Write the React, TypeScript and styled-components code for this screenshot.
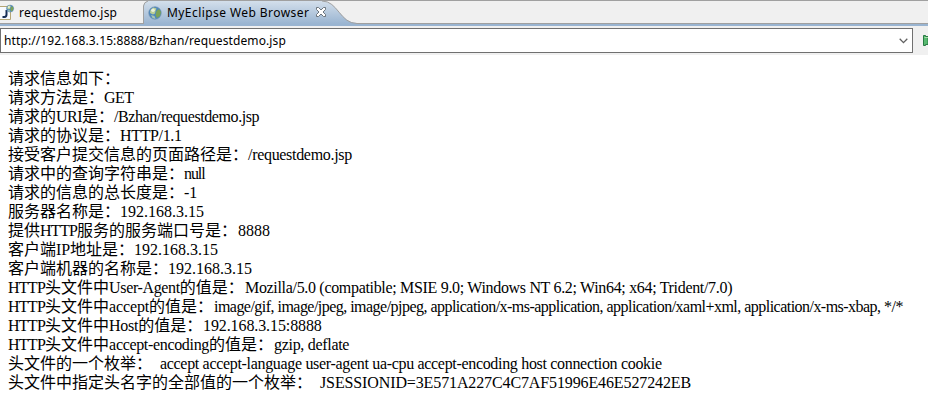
import React from "react";
import styled, { createGlobalStyle } from "styled-components";

const GlobalStyle = createGlobalStyle`
  * { box-sizing: border-box; }
  body { margin: 0; background: #fff; overflow: hidden; }
`;

const Window = styled.div`
  display: flex;
  flex-direction: column;
  width: 928px;
  height: 400px;
  overflow: hidden;
  background: #fff;
`;

const TabBar = styled.div`
  display: flex;
  flex: none;
  height: 26px;
  background: #f0f0f0;
  border-top: 1px solid #a0a0a0;
  border-bottom: 2px solid #99b4d1;
  font: 12px/23px "Noto Sans", sans-serif;
  color: #000;
`;

const Tab = styled.div`
  display: flex;
  align-items: center;
  flex: none;
  width: 143px;
  height: 23px;
  border-bottom: 1px solid #a0a0a0;
`;

const ActiveTab = styled.div`
  position: relative;
  flex: none;
  width: 217px;
  height: 23px;
`;

const TabShape = styled.svg`
  position: absolute;
  inset: 0;
`;

const TabContent = styled.div`
  position: relative;
  display: flex;
  align-items: center;
  height: 23px;
  padding-left: 5px;
`;

const TabFill = styled.div`
  flex: 1;
  height: 23px;
  border-bottom: 1px solid #a0a0a0;
`;

const TabTitle = styled.span<{ $width: number; $gap: number; $spacing: number }>`
  flex: none;
  width: ${(p) => p.$width}px;
  margin-left: ${(p) => p.$gap}px;
  letter-spacing: ${(p) => p.$spacing}px;
  white-space: nowrap;
`;

const Icon = styled.svg`
  display: block;
  flex: none;
`;

const AddressBar = styled.div`
  display: flex;
  align-items: flex-start;
  flex: none;
  height: 29px;
  padding-top: 2px;
  background: #f0f0f0;
`;

const AddressField = styled.div`
  display: flex;
  align-items: center;
  justify-content: space-between;
  width: 913px;
  height: 25px;
  padding: 0 4px 0 3px;
  border: 1px solid #707070;
  background: #fff;
  font: 12px/23px "Noto Sans", sans-serif;
  color: #000;
`;

const Address = styled.span`
  letter-spacing: 0.11px;
`;

const CloseIcon = styled(Icon)`
  margin-bottom: 2px;
`;

const GoIcon = styled(Icon)`
  margin: 7px 0 0 10px;
`;

const Page = styled.main`
  flex: 1;
  padding: 14px 0 0 8px;
  font: 16px/19px "Liberation Serif", "Noto Sans CJK SC", serif;
  color: #000;
`;

const Line = styled.div`
  display: flex;
  height: 19px;
  white-space: pre;
`;

const Label = styled.span<{ $width: number }>`
  flex: none;
  width: ${(p) => p.$width}px;
`;

const Latin = styled.span<{ $spacing?: number }>`
  letter-spacing: ${(p) => p.$spacing ?? 0}px;
`;

type Entry = { label: string; width: number; value?: string; spacing?: number };

const entries: Entry[] = [
  { label: "请求信息如下：", width: 112 },
  { label: "请求方法是：", width: 96, value: "GET", spacing: -0.6 },
  { label: "请求的URI是：", width: 106, value: "/Bzhan/requestdemo.jsp", spacing: -0.41 },
  { label: "请求的协议是：", width: 112, value: "HTTP/1.1", spacing: -0.35 },
  { label: "接受客户提交信息的页面路径是：", width: 240, value: "/requestdemo.jsp", spacing: -0.31 },
  { label: "请求中的查询字符串是：", width: 176, value: "null", spacing: -1.1 },
  { label: "请求的信息的总长度是：", width: 176, value: "-1" },
  { label: "服务器名称是：", width: 112, value: "192.168.3.15" },
  { label: "提供HTTP服务的服务端口号是：", width: 230, value: "8888" },
  { label: "客户端IP地址是：", width: 126, value: "192.168.3.15" },
  { label: "客户端机器的名称是：", width: 160, value: "192.168.3.15" },
  { label: "HTTP头文件中User-Agent的值是：", width: 237, value: "Mozilla/5.0 (compatible; MSIE 9.0; Windows NT 6.2; Win64; x64; Trident/7.0)", spacing: -0.32 },
  { label: "HTTP头文件中accept的值是：", width: 206, value: "image/gif, image/jpeg, image/pjpeg, application/x-ms-application, application/xaml+xml, application/x-ms-xbap, */*", spacing: -0.53 },
  { label: "HTTP头文件中Host的值是：", width: 195, value: "192.168.3.15:8888", spacing: -0.1 },
  { label: "HTTP头文件中accept-encoding的值是：", width: 266, value: "gzip, deflate", spacing: -0.3 },
  { label: "头文件的一个枚举：", width: 152, value: "accept accept-language user-agent ua-cpu accept-encoding host connection cookie", spacing: -0.32 },
  { label: "头文件中指定头名字的全部值的一个枚举：", width: 312, value: "JSESSIONID=3E571A227C4C7AF51996E46E527242EB", spacing: -0.12 },
];

const wordSpacing: Record<string, number> = {
  HTTP: -0.73,
  URI: -0.53,
  IP: -0.1,
  Host: -0.3,
  accept: -0.15,
  "User-Agent": -0.36,
  "accept-encoding": -0.33,
};

function LabelText({ text }: { text: string }) {
  return (
    <>
      {text.split(/([A-Za-z-]+)/).map((part, i) =>
        part in wordSpacing ? <Latin key={i} $spacing={wordSpacing[part]}>{part}</Latin> : part,
      )}
    </>
  );
}

function Globe() {
  return (
    <>
      <circle cx="7" cy="7" r="6.2" fill="#4d88bd" stroke="#6c8fb0" strokeWidth=".7" />
      <path d="M2.5 4 5.5 1.5 8.5 2.5 7.5 5 7 7.5 5 8.5 2 7Z" fill="#bccf95" />
      <path d="m8.5 5 2.5-2 2 3-1 4-3 2-1.5-3Z" fill="#7ca357" />
      <path d="m3 9 3.5 1 1 3-3-1Z" fill="#a9c4b0" />
      <circle cx="5" cy="4.2" r="1.8" fill="#f3f8e8" opacity=".85" />
    </>
  );
}

export default function App() {
  return (
    <Window>
      <GlobalStyle />
      <TabBar>
        <Tab>
          <Icon width="15" height="20" viewBox="0 0 15 20">
            <path d="M0 4.5h10.5v13H0" fill="#f7faff" stroke="#b5a675" />
            <path d="M6.5 8v4.6Q6.5 15 4.5 15H2.5" fill="none" stroke="#162d57" strokeWidth="2" />
            <g transform="translate(6 2.5) scale(.58)"><Globe /></g>
          </Icon>
          <TabTitle $width={110} $gap={4} $spacing={0.2}>requestdemo.jsp</TabTitle>
        </Tab>
        <ActiveTab>
          <TabShape width="217" height="23" viewBox="0 0 217 23">
            <defs>
              <linearGradient id="tab-gradient" x1="0" y1="0" x2="0" y2="1">
                <stop offset="0" stopColor="#d3dfeb" />
                <stop offset="1" stopColor="#99b4d1" />
              </linearGradient>
            </defs>
            <path d="M0 23V5Q1 1 5 0H179C195 0 197 22 214 22H217V23Z" fill="url(#tab-gradient)" />
            <path d="M.5 23V5Q1 1 5 0M179 0C195 0 197 22.5 214 22.5H217" fill="none" stroke="#a0a0a0" />
          </TabShape>
          <TabContent>
            <Icon width="14" height="14" viewBox="0 0 14 14"><Globe /></Icon>
            <TabTitle $width={148} $gap={5} $spacing={0.43}>MyEclipse Web Browser</TabTitle>
            <CloseIcon width="12" height="12" viewBox="0 0 12 12">
              <path d="M1.5 1.5h2L6 4l2.5-2.5h2v2L8 6l2.5 2.5v2h-2L6 8l-2.5 2.5h-2v-2L4 6 1.5 3.5Z" fill="#fff" stroke="#606970" strokeWidth=".9" />
            </CloseIcon>
          </TabContent>
        </ActiveTab>
        <TabFill />
      </TabBar>
      <AddressBar>
        <AddressField>
          <Address>http://192.168.3.15:8888/Bzhan/requestdemo.jsp</Address>
          <Icon width="9" height="7" viewBox="0 0 9 7">
            <path d="m.7 1.8 3.8 3.8 3.8-3.8" fill="none" stroke="#606060" strokeWidth="1.3" />
          </Icon>
        </AddressField>
        <GoIcon width="5" height="11" viewBox="0 0 5 11">
          <path d="M.5.5h2v1H5v8H2.5v1h-2Z" fill="#58b970" stroke="#277b42" />
          <path d="M1.5 2.5H5" stroke="#a9dda8" />
        </GoIcon>
      </AddressBar>
      <Page>
        {entries.map((entry) => (
          <Line key={entry.label}>
            <Label $width={entry.width}><LabelText text={entry.label} /></Label>
            {entry.value && <Latin $spacing={entry.spacing}>{entry.value}</Latin>}
          </Line>
        ))}
      </Page>
    </Window>
  );
}
